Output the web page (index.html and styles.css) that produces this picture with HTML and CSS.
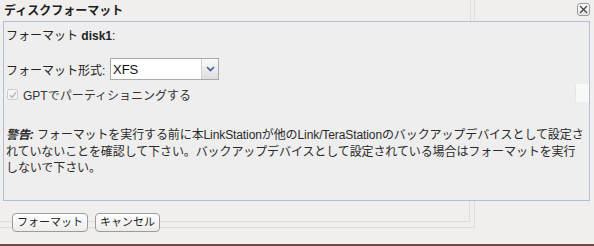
FILE: index.html
```html
<!DOCTYPE html>
<html lang="ja">
<head>
  <meta charset="UTF-8">
  <title>ディスクフォーマット</title>
  <link rel="stylesheet" href="styles.css">
</head>
<body>
  <div class="dialog">
    <div class="titlebar">
      <span class="title">ディスクフォーマット</span>
      <span class="close-btn">
        <svg width="9" height="9" viewBox="0 0 9 9"><path d="M1 1 L8 8 M8 1 L1 8" stroke="#444" stroke-width="1.3"/></svg>
      </span>
    </div>

    <div class="panel">
      <div class="disk-line">フォーマット <b>disk1</b>:</div>

      <div class="format-row">
        <label for="fstype">フォーマット形式:</label>
        <div class="select-box">
          <span class="select-value">XFS</span>
          <span class="select-arrow">
            <svg width="9" height="6" viewBox="0 0 9 6"><path d="M1 1 L4.5 4.5 L8 1" fill="none" stroke="#3f5f94" stroke-width="1.6"/></svg>
          </span>
        </div>
      </div>

      <div class="check-row">
        <span class="checkbox">
          <svg width="8" height="8" viewBox="0 0 8 8"><path d="M1 4.2 L3.2 6.4 L7 1.4" fill="none" stroke="#b5b5b5" stroke-width="1.3"/></svg>
        </span>
        <span class="check-label">GPTでパーティショニングする</span>
      </div>

      <p class="warning">
        <b><i>警告:</i></b> フォーマットを実行する前に本LinkStationが他のLink/TeraStationのバックアップデバイスとして設定さ<br>れていないことを確認して下さい。バックアップデバイスとして設定されている場合はフォーマットを実行<br>しないで下さい。
      </p>

      <span class="side-tab"></span>
    </div>

    <div class="footer">
      <button class="btn">フォーマット</button>
      <button class="btn">キャンセル</button>
      <span class="ghost"></span>
    </div>
  </div>
</body>
</html>
```

FILE: styles.css
```css
html, body {
  margin: 0;
  padding: 0;
}
body {
  font-family: 'Liberation Sans', 'Noto Sans CJK JP', sans-serif;
  font-size: 12px;
  color: #222;
  background: #f0efee;
}
.dialog {
  position: relative;
  width: 594px;
  height: 246px;
  box-sizing: border-box;
  border-bottom: 2px solid #6e4b45;
}
.titlebar {
  height: 21px;
  display: flex;
  align-items: center;
  justify-content: space-between;
  padding: 0 4px;
  position: relative;
}
.titlebar::after {
  content: "";
  position: absolute;
  left: 470px;
  top: 0;
  width: 3px;
  height: 21px;
  border-left: 1px solid #e2dddb;
  border-right: 1px solid #e2dddb;
}
.title {
  font-weight: bold;
  font-size: 12px;
  color: #1e1e1e;
  margin-top: -2px;
}
.close-btn {
  width: 11px;
  height: 11px;
  border: 1px solid #9a9a9a;
  border-radius: 3px;
  background: linear-gradient(#ffffff, #e6e6e6);
  display: flex;
  align-items: center;
  justify-content: center;
  margin-top: -3px;
}
.panel {
  position: relative;
  margin: 0 4px 0 3px;
  height: 180px;
  box-sizing: border-box;
  border: 1px solid #b1bedb;
  background: #eeeeee;
  padding: 6px 2px 0 2px;
}
.disk-line {
  line-height: 16px;
}
.format-row {
  display: flex;
  align-items: center;
  margin-top: 14px;
}
.format-row label {
  width: 104px;
}
.select-box {
  width: 107px;
  height: 20px;
  border: 1px solid #a9a9a9;
  background: #fff;
  display: flex;
  align-items: center;
  justify-content: space-between;
}
.select-value {
  font-size: 13px;
  padding-left: 2px;
  color: #111;
}
.select-arrow {
  width: 16px;
  height: 20px;
  border-left: 1px solid #cfcfcf;
  background: linear-gradient(#fbfbfb, #dedede);
  display: flex;
  align-items: center;
  justify-content: center;
}
.check-row {
  display: flex;
  align-items: center;
  margin-top: 6px;
  padding-left: 1px;
}
.checkbox {
  width: 9px;
  height: 9px;
  border: 1px solid #cdcdcd;
  border-radius: 2px;
  background: #f5f5f5;
  display: flex;
  align-items: center;
  justify-content: center;
  margin-right: 5px;
}
.check-label {
  color: #333;
}
.warning {
  margin: 24px 0 0 0;
  line-height: 16.5px;
  color: #2a2a2a;
  white-space: nowrap;
  letter-spacing: -0.1px;
}
.side-tab {
  position: absolute;
  right: 0;
  top: 62px;
  width: 13px;
  height: 18px;
  background: #f8f8f8;
  border-left: 1px solid #e6e6e6;
}
.footer {
  position: relative;
  display: flex;
  gap: 7px;
  padding: 12px 0 0 12px;
}
.ghost {
  position: absolute;
  left: 0;
  top: 0;
  width: 474px;
  height: 26px;
  border-right: 1px solid #e0dcda;
  border-bottom: 1px solid #e0dcda;
  z-index: -1;
}
.ghost::before {
  content: "";
  position: absolute;
  left: 0;
  top: 0;
  width: 469px;
  height: 20px;
  border-right: 1px solid #e0dcda;
  border-bottom: 1px solid #e0dcda;
}
.btn {
  font-family: 'Liberation Sans', 'Noto Sans CJK JP', sans-serif;
  font-size: 11px;
  height: 19px;
  padding: 0 4px;
  border: 1px solid #9c9c9c;
  border-radius: 4px;
  background: linear-gradient(#ffffff, #ececec);
  color: #222;
  line-height: 15px;
}
```
